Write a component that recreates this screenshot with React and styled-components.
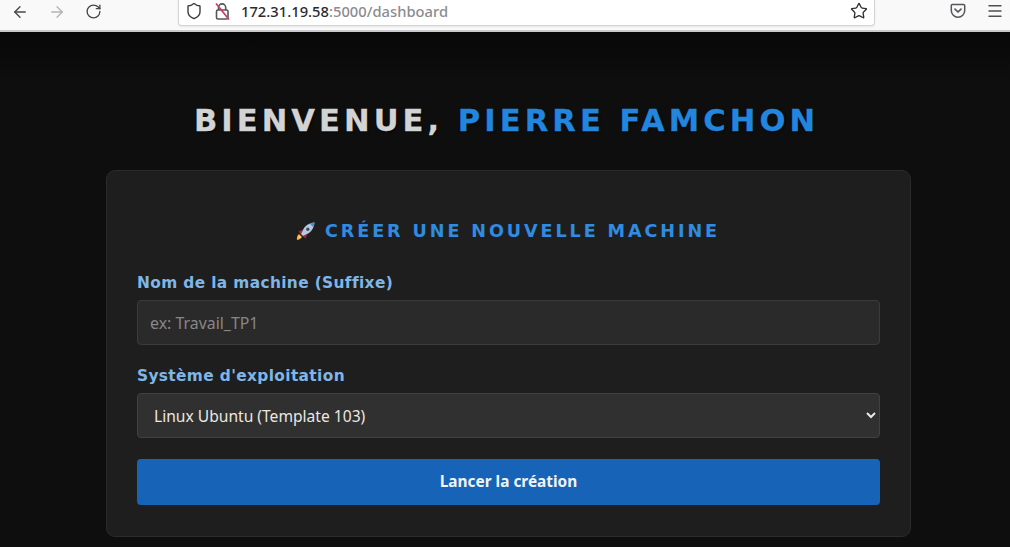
import React from "react";
import styled, { createGlobalStyle } from "styled-components";
import { ArrowLeft, ArrowRight, RotateCw, Shield, Star, Menu } from "lucide-react";

const Global = createGlobalStyle`
  html, body { margin: 0; padding: 0; height: 100%; background: #0c0c0c; overflow: hidden; }
  #root { height: 100%; }
  * { box-sizing: border-box; }
`;

const Page = styled.div`
  width: 1010px;
  height: 547px;
  display: flex;
  flex-direction: column;
  overflow: hidden;
  background: #0d0d0e;
`;

const Toolbar = styled.header`
  height: 32px;
  flex: none;
  display: flex;
  align-items: flex-start;
  background: #f9f9fa;
  border-bottom: 2px solid #c9c9cb;
  padding-left: 10px;
`;

const NavGroup = styled.div`
  display: flex;
  align-items: center;
  gap: 18px;
  height: 23px;
  width: 168px;
`;

const NavIcon = styled.span`
  display: flex;
  width: 19px;
  justify-content: center;
  color: ${(p) => (p.$dim ? "#b4b4b8" : "#47474c")};
`;

const UrlBar = styled.div`
  width: 697px;
  height: 26px;
  display: flex;
  align-items: center;
  background: #fff;
  border: 1px solid #d4d4d6;
  border-top: none;
  border-radius: 0 0 4px 4px;
  padding: 0 6px 3px 6px;
  box-shadow: 0 1px 2px rgba(0, 0, 0, 0.08);
`;

const UrlIcons = styled.div`
  display: flex;
  align-items: center;
  gap: 10px;
  color: #3f3f44;
  width: 56px;
  flex: none;
`;

const UrlText = styled.div`
  flex: 1;
  font: 500 14.7px "Noto Sans", "Open Sans", sans-serif;
  color: #8b8b90;
  white-space: nowrap;
  letter-spacing: 0.03px;
`;

const Host = styled.span`
  color: #2a2a2e;
`;

const RightIcons = styled.div`
  display: flex;
  align-items: center;
  gap: 20px;
  height: 22px;
  margin-left: 75px;
  color: #4e4e53;
`;

const Main = styled.main`
  flex: 1;
  display: flex;
  flex-direction: column;
  align-items: center;
  padding: 71px 0 0 7px;
  background: linear-gradient(#070707, #0e0e0f 50px);
`;

const Title = styled.h1`
  margin: 0 4px 29px 0;
  height: 38px;
  font: bold 30.6px/36px "DejaVu Sans", sans-serif;
  letter-spacing: 4.05px;
  color: #d2d3d5;
  white-space: nowrap;
  text-shadow: 1px 1px 2px rgba(0, 0, 0, 0.8);
  -webkit-text-stroke: 0.3px currentColor;
`;

const Accent = styled.span`
  color: #2286de;
`;

const Card = styled.section`
  width: 805px;
  height: 367px;
  flex: none;
  background: #1e1e1f;
  border: 1px solid #2b2b2c;
  border-radius: 9px;
  padding: 47px 30px 0;
  display: flex;
  flex-direction: column;
`;

const CardTitle = styled.h2`
  margin: 0 0 30px;
  height: 26px;
  font: bold 17.6px/26px "DejaVu Sans", sans-serif;
  letter-spacing: 2.9px;
  color: #2f8ce0;
  display: flex;
  justify-content: center;
  align-items: center;
  gap: 9px;
  padding-right: 2px;
  white-space: nowrap;
`;

const Label = styled.label`
  display: block;
  height: 18px;
  margin-bottom: 8px;
  font: bold 15.4px/18px "DejaVu Sans", sans-serif;
  letter-spacing: 0.36px;
  color: #7fb6e6;
`;

const TextInput = styled.input`
  display: block;
  width: 100%;
  height: 45px;
  margin-bottom: 22px;
  padding: 0 12px;
  background: #2a2a2b;
  border: 1px solid #3b3b3c;
  border-radius: 4px;
  font: 15.9px "Noto Sans", sans-serif;
  color: #eee;
  outline: none;
  &::placeholder { color: #888785; opacity: 1; }
`;

const SelectInput = styled.select`
  display: block;
  width: 100%;
  height: 45px;
  margin-bottom: 21px;
  padding: 0 12px;
  background: #303031;
  border: 1px solid #414142;
  border-radius: 4px;
  font: 15.6px "Noto Sans", sans-serif;
  color: #ece7e0;
  color-scheme: dark;
  outline: none;
`;

const Submit = styled.button`
  display: block;
  width: 100%;
  height: 46px;
  padding-bottom: 3px;
  background: #1763b8;
  border: none;
  border-radius: 4px;
  font: bold 15.4px "Noto Sans", sans-serif;
  color: #f1f3f5;
`;

const LockIcon = () => (
  <svg width="19" height="19" viewBox="0 0 19 19" fill="none">
    <path d="M5.500 8V5.500a3.600 3.600 0 0 1 7.200 0V8" stroke="#55555a" strokeWidth="1.6" />
    <rect x="3.5" y="8" width="11.5" height="9" rx="1.5" stroke="#55555a" strokeWidth="1.6" />
    <path d="M3 1.500 16 17.500" stroke="#c8405f" strokeWidth="1.7" />
  </svg>
);

const PocketIcon = () => (
  <svg width="16" height="16" viewBox="0 0 16 16" fill="none">
    <path d="M2.400 1.500h11.200c.6 0 1.100.5 1.100 1.100v5a6.700 6.700 0 0 1-13.400 0v-5c0-.6.5-1.100 1.100-1.100Z" stroke="#55555a" strokeWidth="1.5" />
    <path d="M5 6.200 8 9l3-2.800" stroke="#55555a" strokeWidth="1.7" strokeLinecap="round" strokeLinejoin="round" />
  </svg>
);

const Rocket = () => (
  <svg width="21" height="21" viewBox="0 0 21 21">
    <path d="M2 19c-.6-2.600.4-4.800 2-6l3 3c-1.200 1.700-2.800 2.700-5 3Z" fill="#f0a830" />
    <path d="M3.300 17.500c-.2-1.300.3-2.300 1.200-3l1.500 1.500c-.7.900-1.500 1.400-2.700 1.500Z" fill="#f7e06a" />
    <path d="M3.500 10.500 8 8.500l-2 5-2.500-3Z" fill="#b3213f" />
    <path d="M10.500 17.500 12.500 13l-5 2 3 2.500Z" fill="#a81f46" />
    <path d="M19.500 1.500c-4.500.3-8 2.300-10.500 5.500L6 13l2 2 6-3c3.200-2.500 5.200-6 5.500-10.500Z" fill="#b9c8da" />
    <path d="M19.500 1.500c-1.800.1-3.300.5-4.700 1.200l3.500 3.500c.7-1.400 1.100-2.900 1.200-4.700Z" fill="#3f8fd8" />
    <circle cx="12.800" cy="8.200" r="1.700" fill="#2c4f7a" />
  </svg>
);

export default function App() {
  return (
    <Page>
      <Global />
      <Toolbar>
        <NavGroup>
          <NavIcon><ArrowLeft size={18} strokeWidth={1.8} /></NavIcon>
          <NavIcon $dim><ArrowRight size={18} strokeWidth={1.8} /></NavIcon>
          <NavIcon><RotateCw size={17} strokeWidth={1.9} /></NavIcon>
        </NavGroup>
        <UrlBar>
          <UrlIcons>
            <Shield size={18} strokeWidth={1.9} />
            <LockIcon />
          </UrlIcons>
          <UrlText><Host>172.31.19.58</Host>:5000/dashboard</UrlText>
          <Star size={18} strokeWidth={1.8} color="#303035" />
        </UrlBar>
        <RightIcons>
          <PocketIcon />
          <Menu size={18} strokeWidth={1.8} />
        </RightIcons>
      </Toolbar>
      <Main>
        <Title>BIENVENUE, <Accent>PIERRE FAMCHON</Accent></Title>
        <Card>
          <CardTitle><Rocket />CRÉER UNE NOUVELLE MACHINE</CardTitle>
          <Label htmlFor="name">Nom de la machine (Suffixe)</Label>
          <TextInput id="name" placeholder="ex: Travail_TP1" />
          <Label htmlFor="os">Système d'exploitation</Label>
          <SelectInput id="os" defaultValue="ubuntu">
            <option value="ubuntu">Linux Ubuntu (Template 103)</option>
          </SelectInput>
          <Submit type="button">Lancer la création</Submit>
        </Card>
      </Main>
    </Page>
  );
}
